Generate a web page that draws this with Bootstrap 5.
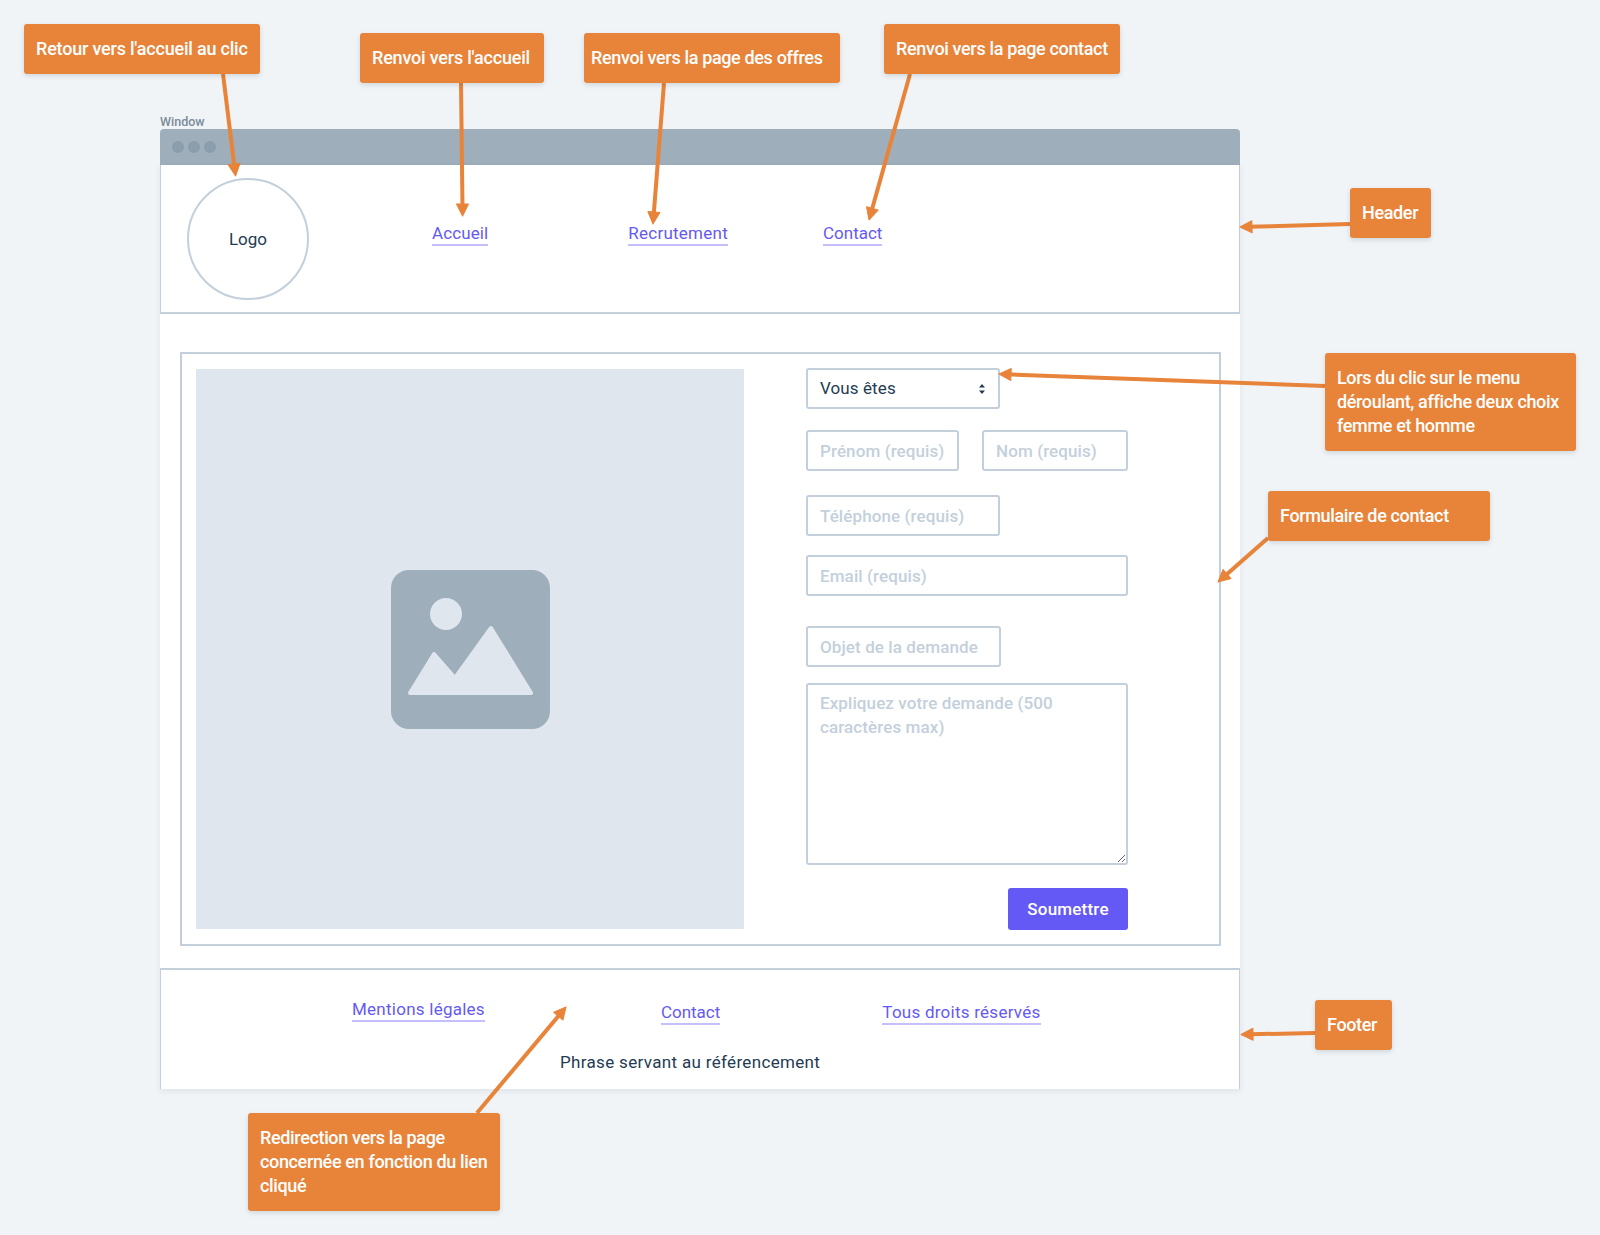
<!doctype html>
<html lang="fr"><head><meta charset="utf-8"><title>Wireframe</title>
<link href="https://cdn.jsdelivr.net/npm/bootstrap@5.3.0/dist/css/bootstrap.min.css" rel="stylesheet">
<style>
html,body{height:1235px;overflow:hidden}
body{background:#f0f4f7;font-family:Roboto,"Liberation Sans",sans-serif;color:#243b53;position:relative;width:1600px}
.note{position:absolute;background:#e8833a;color:#fff;border-radius:3px;box-shadow:0 2px 5px rgba(16,42,67,.14);padding:13px 12px;font-size:18px;font-weight:500;line-height:24px;z-index:3;letter-spacing:-.35px;white-space:nowrap}
.wires{position:absolute;left:0;top:0;z-index:2;pointer-events:none}
.wire{stroke:#e8833a;stroke-width:4;fill:none}
.win{position:absolute;left:160px;top:115px;width:1080px}
.win-label{font-size:12.5px;line-height:14px;color:#7b8b9a;font-weight:500}
.win-bar{height:36px;background:#9eaebb;border-radius:4px 4px 0 0;padding-left:12px;gap:4px}
.win-dot{width:12px;height:12px;border-radius:50%;background:#8b9eae}
.win-body{background:#fff;box-shadow:0 2px 6px rgba(16,42,67,.08)}
.wf-head{height:149px;border:solid #c3cfda;border-width:0 1px 2px;padding:13px 0 0 26px}
.wf-logo{width:122px;height:122px;border:2px solid #c3cfda;border-radius:50%;font-size:17px;padding-top:2px}
.wf-link{color:#6559f5;text-decoration:none;font-size:17px;line-height:22px;border-bottom:2px solid #c4bfff;display:inline-block;letter-spacing:.25px}
.wf-tight{letter-spacing:0}
.nl1{margin:44px 0 0 123px;letter-spacing:.1px}.nl2{margin:44px 0 0 140px}.nl3{margin:44px 0 0 95px}
.wf-main{height:654px;padding:38px 19px 22px 20px}
.wf-frame{height:594px;border:2px solid #c3cfda;padding:15px 14px}
.wf-pic{width:548px;height:560px;background:#dfe6ee}
.wf-form{margin-left:62px;width:322px}
.wf-form>*{flex-shrink:0}
.wf-form .form-control,.wf-form .form-select{height:41px;border:2px solid #c3cfda;border-radius:3px;font-size:17px;padding:0 12px;color:#243b53;box-shadow:none;letter-spacing:.1px}
.wf-form .form-control::placeholder{color:#c3d0db;font-weight:500}
.wf-form textarea.form-control{height:182px;padding:6px 12px;line-height:24px;margin-top:16px}
.wf-form .form-select{padding-top:1px;background-image:url("data:image/svg+xml,%3Csvg xmlns='http://www.w3.org/2000/svg' viewBox='0 0 8 12'%3E%3Cpath fill='%23243b53' d='M4 1l3 3.6H1zM4 11L1 7.4h6z'/%3E%3C/svg%3E");background-size:8px 12px;background-position:right 12px center}
.w194{width:194px}.w195{width:195px}.w153{width:153px}.w146{width:146px}
.gp1{margin-top:-1px}.gp2{margin-top:21px;gap:23px}.gp3{margin-top:24px}.gp4{margin-top:19px}.gp5{margin-top:30px}
.wf-send{margin:23px 0 0 auto;width:120px;height:42px;background:#6559f5;border:0;border-radius:3px;color:#fff;font-size:17px;font-weight:500;padding:1px 0 0;letter-spacing:.2px}
.wf-foot{height:121px;border:solid #c3cfda;border-width:2px 1px 0 1px}
.fr{padding-left:191px}
.fl1{margin-top:28px}.fl2{margin:31px 0 0 176px}.fl3{margin:31px 0 0 162px}
.wf-phrase{margin:25px 0 0 399px;font-size:17px;line-height:24px;letter-spacing:.33px}
.n1{left:24px;top:24px;width:236px;letter-spacing:-.2px}.n2{left:360px;top:33px;width:184px;letter-spacing:-.2px}.n3{left:584px;top:33px;width:256px;padding-left:7px}.n4{left:884px;top:24px;width:236px}
.n5{left:1350px;top:188px;width:81px}.n6{left:1325px;top:353px;width:251px}.n7{left:1268px;top:491px;width:222px}.n8{left:1315px;top:1000px;width:77px}.n9{left:248px;top:1113px;width:252px}
</style></head><body>
<svg class="wires" width="1600" height="1235" aria-hidden="true">
<defs><marker id="tip" markerUnits="userSpaceOnUse" markerWidth="16" markerHeight="16" refX="5" refY="8" orient="auto"><path d="M1 2 L13 8 L1 14z" fill="#e8833a" stroke="#e8833a" stroke-linejoin="round"/></marker></defs>
<line class="wire" x1="223" y1="74" x2="234.6" y2="168" marker-end="url(#tip)"/>
<line class="wire" x1="461" y1="83" x2="462.5" y2="208" marker-end="url(#tip)"/>
<line class="wire" x1="664" y1="83" x2="653.6" y2="216" marker-end="url(#tip)"/>
<line class="wire" x1="910" y1="74" x2="871.2" y2="212.3" marker-end="url(#tip)"/>
<line class="wire" x1="1350" y1="224" x2="1248" y2="226.8" marker-end="url(#tip)"/>
<line class="wire" x1="1325" y1="386" x2="1007" y2="374.3" marker-end="url(#tip)"/>
<line class="wire" x1="1268" y1="538" x2="1224" y2="576.7" marker-end="url(#tip)"/>
<line class="wire" x1="1315" y1="1033" x2="1249" y2="1034.3" marker-end="url(#tip)"/>
<line class="wire" x1="477" y1="1113" x2="560.9" y2="1013.1" marker-end="url(#tip)"/>
</svg>
<div class="note n1">Retour vers l'accueil au clic</div>
<div class="note n2">Renvoi vers l'accueil</div>
<div class="note n3">Renvoi vers la page des offres</div>
<div class="note n4">Renvoi vers la page contact</div>
<div class="note n5">Header</div>
<div class="note n6">Lors du clic sur le menu<br>déroulant, affiche deux choix<br>femme et homme</div>
<div class="note n7">Formulaire de contact</div>
<div class="note n8">Footer</div>
<div class="note n9">Redirection vers la page<br>concernée en fonction du lien<br>cliqué</div>
<div class="win">
<div class="win-label">Window</div>
<div class="win-bar d-flex align-items-center"><span class="win-dot"></span><span class="win-dot"></span><span class="win-dot"></span></div>
<div class="win-body">
<header class="wf-head d-flex align-items-start">
<div class="wf-logo d-flex align-items-center justify-content-center">Logo</div>
<a class="wf-link nl1" href="#">Accueil</a><a class="wf-link nl2" href="#">Recrutement</a><a class="wf-link nl3 wf-tight" href="#">Contact</a>
</header>
<main class="wf-main">
<div class="wf-frame d-flex">
<div class="wf-pic d-flex align-items-center justify-content-center">
<svg width="159" height="159" viewBox="0 0 159 159" aria-hidden="true"><rect width="159" height="159" rx="18" fill="#9eaebb"/><circle cx="55" cy="44" r="16" fill="#dfe6ee"/><path d="M19 123 L43 84 L64 108 L100 58 L140 123z" fill="#dfe6ee" stroke="#dfe6ee" stroke-width="4" stroke-linejoin="round"/></svg>
</div>
<form class="wf-form d-flex flex-column">
<select class="form-select w194 gp1"><option>Vous êtes</option></select>
<div class="d-flex gp2"><input class="form-control w153" placeholder="Prénom (requis)"><input class="form-control w146" placeholder="Nom (requis)"></div>
<input class="form-control w194 gp3" placeholder="Téléphone (requis)">
<input class="form-control gp4" placeholder="Email (requis)">
<input class="form-control w195 gp5" placeholder="Objet de la demande">
<textarea class="form-control" placeholder="Expliquez votre demande (500 caractères max)"></textarea>
<button type="button" class="btn wf-send">Soumettre</button>
</form>
</div>
</main>
<footer class="wf-foot">
<div class="d-flex align-items-start fr"><a class="wf-link fl1" href="#">Mentions légales</a><a class="wf-link fl2 wf-tight" href="#">Contact</a><a class="wf-link fl3" href="#">Tous droits réservés</a></div>
<div class="wf-phrase">Phrase servant au référencement</div>
</footer>
</div>
</div>
<script src="https://cdn.jsdelivr.net/npm/bootstrap@5.3.0/dist/js/bootstrap.bundle.min.js"></script>
</body></html>
